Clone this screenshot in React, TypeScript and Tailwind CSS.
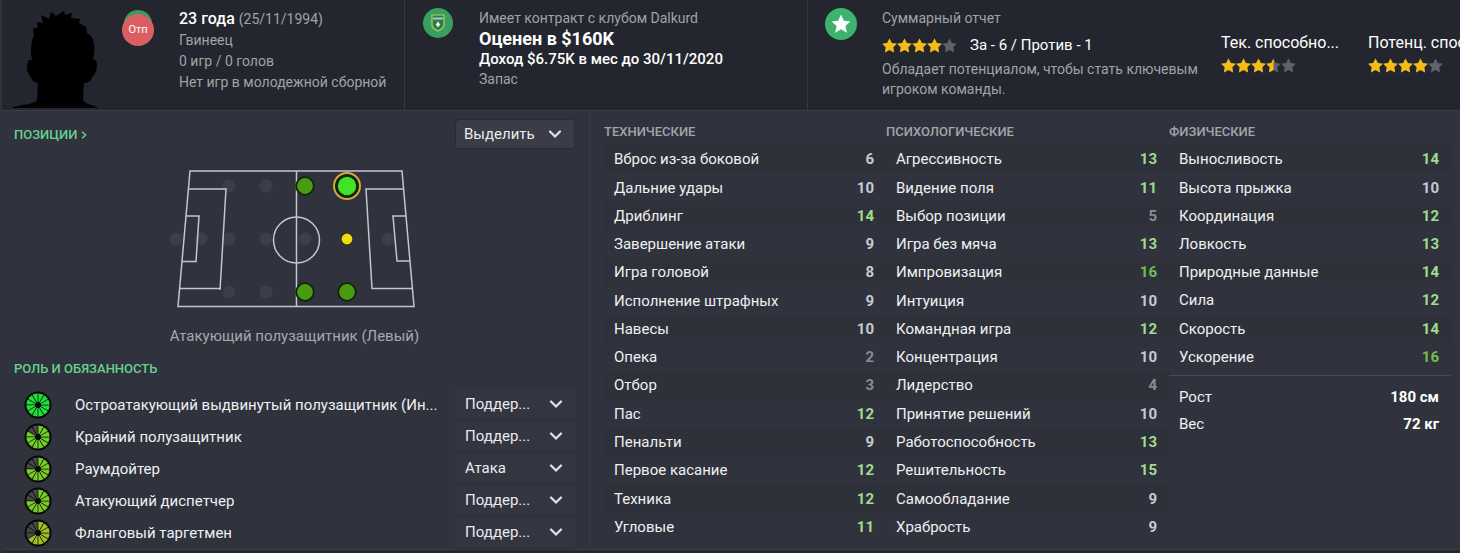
import { ReactNode } from 'react'
import clsx from 'clsx'

type Attribute = [name: string, value: number]

const technical: Attribute[] = [
  ['Вброс из-за боковой', 6],
  ['Дальние удары', 10],
  ['Дриблинг', 14],
  ['Завершение атаки', 9],
  ['Игра головой', 8],
  ['Исполнение штрафных', 9],
  ['Навесы', 10],
  ['Опека', 2],
  ['Отбор', 3],
  ['Пас', 12],
  ['Пенальти', 9],
  ['Первое касание', 12],
  ['Техника', 12],
  ['Угловые', 11],
]

const mental: Attribute[] = [
  ['Агрессивность', 13],
  ['Видение поля', 11],
  ['Выбор позиции', 5],
  ['Игра без мяча', 13],
  ['Импровизация', 16],
  ['Интуиция', 10],
  ['Командная игра', 12],
  ['Концентрация', 10],
  ['Лидерство', 4],
  ['Принятие решений', 10],
  ['Работоспособность', 13],
  ['Решительность', 15],
  ['Самообладание', 9],
  ['Храбрость', 9],
]

const physical: Attribute[] = [
  ['Выносливость', 14],
  ['Высота прыжка', 10],
  ['Координация', 12],
  ['Ловкость', 13],
  ['Природные данные', 14],
  ['Сила', 12],
  ['Скорость', 14],
  ['Ускорение', 16],
]

const roles = [
  { name: 'Остроатакующий выдвинутый полузащитник (Ин...', duty: 'Поддер...', filled: 12, color: '#1fe03c' },
  { name: 'Крайний полузащитник', duty: 'Поддер...', filled: 10, color: '#6ed028' },
  { name: 'Раумдойтер', duty: 'Атака', filled: 9, color: '#7acb27' },
  { name: 'Атакующий диспетчер', duty: 'Поддер...', filled: 9, color: '#7acb27' },
  { name: 'Фланговый таргетмен', duty: 'Поддер...', filled: 8, color: '#a0bf26' },
]

const STAR = 'M8 0.4 L10.5 5.2 L15.8 6 L12 9.9 L12.9 15.4 L8 12.9 L3.1 15.4 L4 9.9 L0.2 6 L5.5 5.2 Z'
const HALF_STAR = 'M8 0.4 L8 12.9 L3.1 15.4 L4 9.9 L0.2 6 L5.5 5.2 Z'

function Stars({ value }: { value: number }) {
  return (
    <div className="flex" role="img" aria-label={`${value} / 5`}>
      {[0, 1, 2, 3, 4].map((i) => (
        <svg key={i} viewBox="0 0 16 16" className="w-[15px] h-[15px]">
          <path d={STAR} fill="#5f626a" />
          {value >= i + 1 && <path d={STAR} fill="#f5bd14" />}
          {value === i + 0.5 && <path d={HALF_STAR} fill="#f5bd14" />}
        </svg>
      ))}
    </div>
  )
}

function Silhouette() {
  return (
    <svg viewBox="0 0 88 98" className="w-[88px] h-[98px] shrink-0">
      <path
        d="M0 98 C4 95 22 95 25 90 L26 73 C23 73 20 71 18 66 C14 61 14 54 17 50 L20 50 C18 41 19 32 22 25 L21 19 L26 17 L25 12 L31 13 L29 5 L37 9 L39 2 L44 6 L52 1 L53 5 L60 3 L59 8 L68 9 L67 13 L74 17 L75 23 L80 27 C83 35 83 42 81 50 L84 50 C86 55 85 63 80 67 C79 71 76 73 72 73 L71 90 C74 95 83 95 86 98 Z"
        fill="#000"
      />
    </svg>
  )
}

function RoleWheel({ filled, color }: { filled: number; color: string }) {
  return (
    <svg viewBox="-14 -14 28 28" className="size-7 shrink-0">
      <circle r="13.5" fill="#060906" />
      {Array.from({ length: 12 }, (_, i) => (
        <path
          key={i}
          d="M0.4 -3 L0.4 -11.6 A11.6 11.6 0 0 1 5.5 -10.2 L1.2 -2.8 Z"
          transform={`rotate(${i * 30})`}
          fill={i < filled ? color : '#4b4742'}
        />
      ))}
    </svg>
  )
}

function Chevron() {
  return (
    <svg viewBox="0 0 14 9" className="w-[14px] h-[9px] pointer-events-none col-start-1 row-start-1 justify-self-end mr-3">
      <path d="M2 1.5 L7 6.5 L12 1.5" fill="none" stroke="#dfe2e8" strokeWidth="2.2" strokeLinecap="round" />
    </svg>
  )
}

function Select({ label, value, className }: { label: string; value: string; className?: string }) {
  return (
    <div className={clsx('grid items-center', className)}>
      <select
        aria-label={label}
        className="appearance-none col-start-1 row-start-1 w-full h-full bg-transparent text-[15px] text-[#e9ebee]"
      >
        <option>{value}</option>
      </select>
      <Chevron />
    </div>
  )
}

const FAINT = [[228, 186], [265, 186], [175, 239], [200, 239], [228, 239], [265, 239], [304, 239], [387, 239], [228, 292], [265, 292]]
const GOOD = [[304, 186], [304, 292], [346, 292]]

function Pitch() {
  return (
    <svg viewBox="168 166 252 146" className="w-[252px] h-[146px]">
      {FAINT.map(([x, y]) => (
        <circle key={`${x}-${y}`} cx={x} cy={y} r="6.5" fill="#3b3f49" />
      ))}
      <g fill="none" stroke="#c3c6cd" strokeWidth="1.5">
        <path d="M189 171 H401 L413 306.5 H177 Z" />
        <path d="M295.5 171 V306.5" />
        <circle cx="295.5" cy="240" r="23" />
        <path d="M188 189 H225 L219 290 M179 288.5 H219" />
        <path d="M185.5 216 H198 L195 261.5 H181" />
        <path d="M403 189 H365 L371 288.5 H411" />
        <path d="M405 216 H392 L396 261 H409" />
      </g>
      {GOOD.map(([x, y]) => (
        <circle key={`${x}-${y}`} cx={x} cy={y} r="8.8" fill="#4a9a12" stroke="#0d2608" strokeWidth="1.8" />
      ))}
      <circle cx="346" cy="186" r="12" fill="#0d2608" />
      <circle cx="346" cy="186" r="13" fill="none" stroke="#d9a832" strokeWidth="2" />
      <circle cx="346" cy="186" r="9.2" fill="#42e326" />
      <circle cx="346" cy="239" r="6" fill="#ecdc12" stroke="#332f10" strokeWidth="1.2" />
    </svg>
  )
}

function valueColor(value: number) {
  if (value > 15) return 'text-[#74bd4c]'
  if (value > 10) return 'text-[#a0dc8c]'
  if (value > 5) return 'text-[#c6cad3]'
  return 'text-[#888c94]'
}

function AttributeTable({ title, rows, className, children }: { title: string; rows: Attribute[]; className: string; children?: ReactNode }) {
  return (
    <section className="min-w-0">
      <h2 className="h-[33px] pt-3 text-[13px] leading-[18px] font-medium text-[#a2a5aa]">{title}</h2>
      <table className={clsx('w-full border-t border-[#292d35] text-[15px] leading-5', className)}>
        <tbody>
          {rows.map(([name, value]) => (
            <tr key={name} className="odd:bg-[#2e3139]">
              <th scope="row" className="pl-[10px] text-left font-normal text-[#eef0f2]">{name}</th>
              <td className={clsx('pr-3 text-right font-bold', valueColor(value))}>{value}</td>
            </tr>
          ))}
        </tbody>
      </table>
      {children}
    </section>
  )
}

function Header() {
  return (
    <header className="grid grid-cols-[403fr_403fr_652fr] h-[111px] bg-[#23262e] border-b border-[#3a3e47] text-[14px] text-[#a0a3a8]">
      <section className="flex pl-[10px] pt-[10px] border-r border-[#343840]">
        <Silhouette />
        <div className="grid justify-items-center content-start w-8 ml-[22px] shrink-0">
          <div className="col-start-1 row-start-1 size-7 rounded-full bg-[#3b9a5c]" />
          <div className="col-start-1 row-start-1 mt-1 flex items-center justify-center size-8 rounded-full bg-[#db5f62] text-[11px] text-white">
            Отп
          </div>
        </div>
        <div className="ml-[25px] leading-[21px] whitespace-nowrap -mt-[2px]">
          <p className="text-[16px]">
            <span className="font-medium text-white">23 года</span> <span className="text-[14px]">(25/11/1994)</span>
          </p>
          <p>Гвинеец</p>
          <p>0 игр / 0 голов</p>
          <p>Нет игр в молодежной сборной</p>
        </div>
      </section>

      <section className="flex pl-[18px] pt-2 border-r border-[#343840]">
        <svg viewBox="0 0 30 30" className="size-[30px] shrink-0">
          <circle cx="15" cy="15" r="15" fill="#38a05f" />
          <path d="M9 7 H21 V17 C21 20 18 21.5 15 23 C12 21.5 9 20 9 17 Z" fill="#2c7d49" stroke="#b5cf6a" strokeWidth="1.2" />
          <path d="M10 10.5 H20" stroke="#9fd6ac" strokeWidth="2" />
          <path d="M15 13.6 L17.2 16.4 L15 19.2 L12.8 16.4 Z" fill="#f2fbf0" />
        </svg>
        <div className="ml-[26px] whitespace-nowrap leading-5">
          <p>Имеет контракт с клубом Dalkurd</p>
          <p className="text-[18px] leading-[21px] font-bold text-white">Оценен в $160K</p>
          <p className="text-[15px] font-medium text-white">Доход $6.75K в мес до 30/11/2020</p>
          <p>Запас</p>
        </div>
      </section>

      <section className="flex pl-[17px] pt-2 overflow-hidden">
        <svg viewBox="0 0 32 32" className="size-8 shrink-0">
          <circle cx="16" cy="16" r="16" fill="#3db36f" />
          <path d="M16 6.5 L18.8 12.8 L25.4 13.5 L20.4 18 L21.9 24.8 L16 21.3 L10.1 24.8 L11.6 18 L6.6 13.5 L13.2 12.8 Z" fill="#fff" />
        </svg>
        <div className="ml-[25px] w-[339px] shrink-0 leading-5">
          <p className="mb-[3px]">Суммарный отчет</p>
          <div className="flex items-center gap-[13px] h-7 text-[15px] text-white">
            <Stars value={4} />
            За - 6 / Против - 1
          </div>
          <p>
            Обладает потенциалом, чтобы стать ключевым
            <br />
            игроком команды.
          </p>
        </div>
        <div className="w-[147px] shrink-0 pt-6 text-[16px] leading-[22px] text-white">
          <p className="mb-1">Тек. способно...</p>
          <Stars value={3.5} />
        </div>
        <div className="shrink-0 pt-6 text-[16px] leading-[22px] text-white">
          <p className="mb-1">Потенц. способно...</p>
          <Stars value={4} />
        </div>
      </section>
    </header>
  )
}

function PositionsPanel() {
  return (
    <section className="min-w-0 pl-3 pr-[14px] pt-2 border-r border-[#363a43]">
      <div className="flex items-start justify-between">
        <h2 className="pt-2 text-[13px] leading-4 font-medium text-[#66d18f]">
          <a href="#positions" className="flex items-center gap-1">
            ПОЗИЦИИ
            <svg viewBox="0 0 6 8" className="w-[6px] h-2">
              <path d="M1 0.8 L4.6 4 L1 7.2" fill="none" stroke="currentColor" strokeWidth="1.5" />
            </svg>
          </a>
        </h2>
        <Select
          label="Выделить"
          value="Выделить"
          className="w-[120px] h-[30px] rounded bg-[#3a3d48] border border-[#282b33] pl-2"
        />
      </div>
      <figure className="flex flex-col items-center pt-[17px]">
        <Pitch />
        <figcaption className="mt-[14px] text-[15px] leading-5 text-[#a5a8ad]">Атакующий полузащитник (Левый)</figcaption>
      </figure>
      <h2 className="mt-[15px] text-[13px] leading-4 font-medium text-[#66d18f]">РОЛЬ И ОБЯЗАННОСТЬ</h2>
      <ul className="mt-3">
        {roles.map((role) => (
          <li key={role.name} className="flex items-center h-8">
            <div className="flex items-center flex-1 min-w-0 pl-[10px] gap-[23px] text-[15px] text-[#eef0f2] whitespace-nowrap">
              <RoleWheel filled={role.filled} color={role.color} />
              {role.name}
            </div>
            <Select
              label={role.name}
              value={role.duty}
              className="w-[120px] h-8 pl-[10px] bg-[#333640] border-b border-[#2b2e37]"
            />
          </li>
        ))}
      </ul>
    </section>
  )
}

export default function App() {
  return (
    <div className="min-h-screen flex flex-col overflow-hidden bg-[#262931] border-l-2 border-[#2f343c] font-['Roboto',sans-serif]">
      <Header />
      <main className="grid grid-cols-[588fr_870fr] bg-[#30333d] border-b border-[#393d46]">
        <PositionsPanel />
        <div className="grid grid-cols-[282fr_283fr_282fr] pl-[14px] pr-[9px]">
          <AttributeTable title="ТЕХНИЧЕСКИЕ" rows={technical} className="h-[397px]" />
          <AttributeTable title="ПСИХОЛОГИЧЕСКИЕ" rows={mental} className="h-[397px]" />
          <AttributeTable title="ФИЗИЧЕСКИЕ" rows={physical} className="h-[227px]">
            <dl className="mt-1 pt-2 pl-[10px] pr-3 border-t border-[#454953] text-[15px] leading-[27px] text-[#eef0f2]">
              <div className="flex justify-between">
                <dt>Рост</dt>
                <dd className="font-bold text-white">180 см</dd>
              </div>
              <div className="flex justify-between">
                <dt>Вес</dt>
                <dd className="font-bold text-white">72 кг</dd>
              </div>
            </dl>
          </AttributeTable>
        </div>
      </main>
    </div>
  )
}
